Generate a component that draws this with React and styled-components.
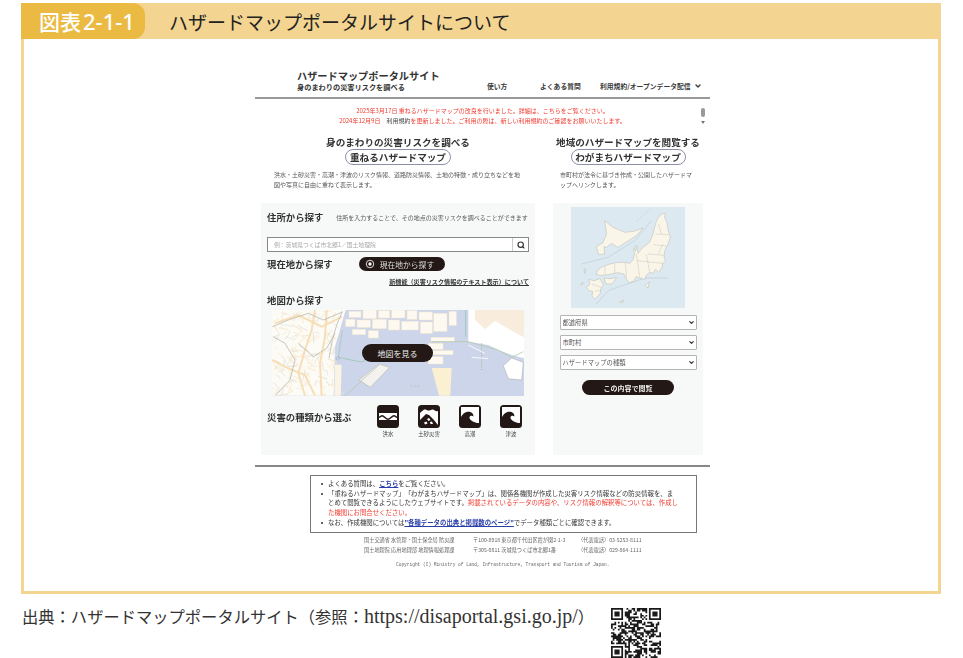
import React from 'react';
import styled, { createGlobalStyle } from 'styled-components';
import { Search, ChevronDown } from 'lucide-react';

const GlobalStyle = createGlobalStyle`
  html, body {
    margin: 0;
    padding: 0;
    background: #fff;
    font-family: "Noto Sans CJK JP", "Noto Sans", sans-serif;
  }
`;

const seeded = (start) => {
  let seed = start;
  return () => {
    seed = (seed * 16807) % 2147483647;
    return seed / 2147483647;
  };
};

// rough outline of the QR, seeded so it stays the same between runs
const buildQrPath = () => {
  const size = 29;
  const next = seeded(7);
  const inFinder = (x, y, ox, oy) => x >= ox && x < ox + 7 && y >= oy && y < oy + 7;
  const finder = (x, y, ox, oy) => {
    const dx = x - ox;
    const dy = y - oy;
    if (dx === 0 || dx === 6 || dy === 0 || dy === 6) return true;
    return dx >= 2 && dx <= 4 && dy >= 2 && dy <= 4;
  };
  let d = '';
  for (let y = 0; y < size; y++) {
    for (let x = 0; x < size; x++) {
      let on;
      if (inFinder(x, y, 0, 0)) on = finder(x, y, 0, 0);
      else if (inFinder(x, y, 22, 0)) on = finder(x, y, 22, 0);
      else if (inFinder(x, y, 0, 22)) on = finder(x, y, 0, 22);
      else if (x === 7 && y < 8) on = false;
      else if (y === 7 && x < 8) on = false;
      else if (x === 21 && y < 8) on = false;
      else if (y === 7 && x > 20) on = false;
      else if (x === 7 && y > 20) on = false;
      else if (y === 21 && x < 8) on = false;
      else on = next() > 0.5;
      if (on) d += `M${x} ${y}h1v1h-1z`;
    }
  }
  return d;
};

const qrPath = buildQrPath();

const QrCode = () => (
  <QrSvg viewBox="0 0 29 29">
    <path d={qrPath} fill="#1a1a1a" />
  </QrSvg>
);

const HazardIcon = ({ kind }) => (
  <svg width="22" height="23" viewBox="0 0 22 23">
    <rect x="0" y="0" width="22" height="23" rx="3.5" fill="#231815" />
    {kind === 'flood' && (
      <>
        <rect x="2" y="8" width="18" height="7" fill="#fff" />
        <path d="M2 12.500c3-2.400 3.400-2.400 6 0s3.400 2.400 6 0 3.400-2.400 6 0" fill="none" stroke="#231815" strokeWidth="1.500" />
      </>
    )}
    {kind === 'slide' && (
      <>
        <path d="M2 2h18v18h-18z" fill="#fff" />
        <path d="M2 2h18v4c-2 1-3.500-1-5-1.500s-3 1.500-5 1-3-1.500-4.500-.5S3 7 2 8z" fill="#231815" />
        <path d="M2 20v-5l6-6 3 1 4 4 5 6z" fill="#231815" />
        <path d="M9 14l2-1 1.500 2-2 1zM6 17.500l2.500-1 1 2-2.500 1zM12 17l2-.5 1 2.500h-2.500z" fill="#fff" />
      </>
    )}
    {kind === 'wave' && (
      <path
        d="M2 2H20V18H18C14 17 10.500 15 10.500 12.500C10.500 10.500 13 10 14.500 11.500C14.500 7.500 11 6 7.500 7C5 7.700 3 10 2 12Z"
        fill="#fff"
      />
    )}
  </svg>
);

// thin street texture on the left hand land, seeded
const buildStreets = () => {
  const next = seeded(41);
  const colors = ['#e4e1d8', '#f7e2bd', '#dcd9d0', '#f3ead6', '#f7e2bd'];
  const streets = [];
  for (let i = 0; i < 170; i++) {
    const x = 52 + next() * 190;
    const y = 30 + next() * 258;
    const len = 10 + next() * 26;
    const angle = next() * Math.PI;
    streets.push({
      d: `M${x.toFixed(0)} ${y.toFixed(0)}L${(x + Math.cos(angle) * len).toFixed(0)} ${(y + Math.sin(angle) * len).toFixed(0)}`,
      color: colors[i % colors.length],
    });
  }
  return streets;
};

const streets = buildStreets();

const mainRoads = [
  'M52 180 L100 205 L150 225 L180 287',
  'M180 30 L170 90 L150 150 L130 220 L150 287',
  'M215 30 L210 110 L195 190 L200 287',
  'M60 70 L130 45 L200 80 L262 50',
];

const grayRoads = [
  'M52 80 L100 60 L160 40 L205 60 L262 36',
  'M55 110 L90 130 L120 180 L105 240 L60 287',
  'M130 130 L175 170 L215 145 L240 100',
  'M262 34 L245 75 L232 120 L222 175',
];

const pierBlocks = [
  [282, 34, 36, 18],
  [324, 30, 40, 26],
  [370, 32, 34, 22],
  [410, 30, 40, 24],
  [456, 32, 30, 26],
  [492, 36, 40, 24],
  [272, 58, 28, 22],
  [306, 60, 40, 22],
  [352, 58, 42, 28],
  [400, 60, 34, 30],
  [440, 64, 50, 26],
  [496, 66, 36, 34],
  [292, 88, 40, 16],
  [340, 92, 30, 22],
  [536, 40, 40, 54],
  [582, 34, 22, 42],
  [528, 112, 70, 12],
  [520, 130, 44, 18],
  [528, 152, 66, 12],
  [520, 170, 44, 22],
];

const TokyoMap = () => (
  <MapSvg viewBox="51 30 756 258" preserveAspectRatio="none">
    <rect x="51" y="30" width="756" height="258" fill="#ccd5ea" />
    <path d="M51 30H272L254 92L240 140L236 287H51Z" fill="#fdfbf6" />
    {streets.map(({ d, color }) => (
      <path key={d} d={d} stroke={color} strokeWidth="2" />
    ))}
    {mainRoads.map((d) => (
      <path key={d} d={d} fill="none" stroke="#f6dfb6" strokeWidth="6" />
    ))}
    {grayRoads.map((d) => (
      <path key={d} d={d} fill="none" stroke="#bcbab4" strokeWidth="2.500" />
    ))}
    {pierBlocks.map(([x, y, w, h]) => (
      <rect key={`${x}-${y}`} x={x} y={y} width={w} height={h} fill="#fdf9f0" stroke="#f5e8cc" strokeWidth="1.500" />
    ))}
    <path d="M640 30H807V175L770 165L730 150L700 135L640 125Z" fill="#fff" />
    <path d="M660 30H807V112L770 92L720 62L690 88L660 60Z" fill="#f8ecdc" />
    <path d="M530 204H590L586 287H552Z" fill="#fbf0d2" />
    <path d="M240 194H260L257 287H238Z" fill="#faf4e6" />
    <path d="M312 240L372 192L404 202L346 262Z" fill="#f3f2ee" stroke="#b9b8b4" strokeWidth="2" />
    <path d="M745 197L770 174L805 187L800 240L760 236Z" fill="#fff" stroke="#a5a5a5" strokeWidth="1.500" />
    <path d="M680 130V210" stroke="#b4ae9f" strokeWidth="3" strokeDasharray="3 4" />
    <path d="M640 135L690 160M650 172L700 176" stroke="#fff" strokeWidth="2.500" />
    <path d="M530 125H640L730 150L770 172L805 155" fill="none" stroke="#b0c8a0" strokeWidth="2.200" />
    <path d="M250 172L320 186L362 168" fill="none" stroke="#8fc6a4" strokeWidth="2" />
    <path d="M372 195L270 287" fill="none" stroke="#b4c8a8" strokeWidth="2.200" />
    <path d="M262 90L250 170" fill="none" stroke="#8fbf9a" strokeWidth="1.500" />
    <path d="M632 30V110" stroke="#85bfa4" strokeWidth="2" />
    <circle cx="248" cy="175" r="5" fill="none" stroke="#8d9cc4" strokeWidth="1.500" />
    <path d="M468 258h3M478 258h3M488 258h3" stroke="#b9a97f" strokeWidth="2.500" />
  </MapSvg>
);

const JapanMap = () => (
  <JapanSvg viewBox="9 9 342 303" preserveAspectRatio="none">
    <rect x="9" y="9" width="342" height="303" fill="#dce9f1" />
    <g fill="none" stroke="#b6c2c9" strokeWidth="1.500">
      <path d="M40 180L120 160L200 110L250 50" />
      <path d="M85 300L120 260L230 222L300 222" />
      <path d="M205 52L248 14" strokeDasharray="8 5" />
    </g>
    <g fill="#f9f5e8" stroke="#aeaca2" strokeWidth="1.200">
      <path d="M110 50L135 70L170 85L198 82L225 72L205 95L172 116L150 130L130 118L116 130L108 128L110 150L92 152L85 128L105 116L116 90Z" />
      <path d="M270 42L280 30L292 28L290 42L297 55L300 78L307 100L300 120L290 140L288 160L293 172L284 178L282 190L272 205L262 196L256 208L246 205L236 212L230 226L218 222L205 218L196 232L184 236L175 225L168 210L150 206L140 208L120 212L100 214L85 212L88 200L100 190L125 180L145 176L170 175L185 178L195 168L200 150L196 136L207 130L210 148L225 130L245 115L255 90L260 70L264 55Z" />
      <path d="M108 222L128 224L146 220L138 232L130 240L114 240Z" />
      <path d="M62 226L78 230L96 224L106 242L98 256L96 270L80 286L72 276L74 262L62 260L56 250L66 240Z" />
      <path d="M200 128L208 125L202 142Z" />
      <path d="M232 244L244 234L240 252Z" />
      <path d="M48 196L54 196L50 208Z" />
      <path d="M155 294L168 288L164 296Z" />
      <path d="M38 240L46 236L42 244Z" />
    </g>
    <g fill="none" stroke="#bdbab0" strokeWidth="1.200">
      <path d="M262 90L302 92M256 122L296 126M240 150L288 154M205 170L284 178M235 150L245 205M205 150L215 218M172 175L176 222M140 180L140 208M110 188L112 212M72 240L100 250M80 262L98 258M272 60L280 90M285 120L270 150" />
    </g>
  </JapanSvg>
);

const App = () => (
  <Page>
    <GlobalStyle />
    <FigureHeader>
      <Badge>図表<BadgeNumber>2-1-1</BadgeNumber></Badge>
      <FigureTitle>ハザードマップポータルサイトについて</FigureTitle>
    </FigureHeader>
    <FigureBody>
      <Site>
        <SiteHeader>
          <Brand>
            <BrandTitle>ハザードマップポータルサイト</BrandTitle>
            <BrandSub>身のまわりの災害リスクを調べる</BrandSub>
          </Brand>
          <Nav>
            <NavItem $width={53}>使い方</NavItem>
            <NavItem $width={60}>よくある質問</NavItem>
            <NavItem $width={106}>
              利用規約/オープンデータ配信
              <ChevronDown size={8} strokeWidth={4} />
            </NavItem>
          </Nav>
        </SiteHeader>
        <Notices>
          <div>2025年3月17日 重ねるハザードマップの改良を行いました。詳細は、こちらをご覧ください。</div>
          <div>
            2024年12月9日　<NoticeDark>利用規約</NoticeDark>を更新しました。ご利用の際は、新しい利用規約のご確認をお願いいたします。
          </div>
          <ScrollThumb />
          <ScrollArrow />
        </Notices>
        <Columns>
          <Column $width={274}>
            <Intro $indent={13}>
              <IntroHeading>身のまわりの災害リスクを調べる</IntroHeading>
              <PillTitle $width={106}>重ねるハザードマップ</PillTitle>
              <IntroText>
                洪水・土砂災害・高潮・津波のリスク情報、道路防災情報、土地の特徴・成り立ちなどを地図や写真に自由に重ねて表示します。
              </IntroText>
            </Intro>
            <Panel $pad={6}>
              <TopRow>
                <SectionTitle>住所から探す</SectionTitle>
                <SectionHint>住所を入力することで、その地点の災害リスクを調べることができます</SectionHint>
              </TopRow>
              <SearchBox>
                <Placeholder>例：茨城県つくば市北郷1／国土地理院</Placeholder>
                <SearchButton>
                  <Search size={8} strokeWidth={3.5} />
                </SearchButton>
              </SearchBox>
              <LocateRow>
                <SectionTitle>現在地から探す</SectionTitle>
                <LocateButton>
                  <LocateIcon viewBox="0 0 12 12">
                    <circle cx="6" cy="6" r="4.500" fill="none" stroke="#fff" strokeWidth="1" />
                    <circle cx="6" cy="6" r="2" fill="#fff" />
                  </LocateIcon>
                  現在地から探す
                </LocateButton>
              </LocateRow>
              <TextLink>新機能（災害リスク情報のテキスト表示）について</TextLink>
              <MapTitle>地図から探す</MapTitle>
              <MapFrame>
                <TokyoMap />
                <MapButton>地図を見る</MapButton>
              </MapFrame>
              <HazardRow>
                <HazardLabel>災害の種類から選ぶ</HazardLabel>
                <HazardList>
                  <HazardItem>
                    <HazardIcon kind="flood" />
                    <HazardName>洪水</HazardName>
                  </HazardItem>
                  <HazardItem>
                    <HazardIcon kind="slide" />
                    <HazardName>土砂災害</HazardName>
                  </HazardItem>
                  <HazardItem>
                    <HazardIcon kind="wave" />
                    <HazardName>高潮</HazardName>
                  </HazardItem>
                  <HazardItem>
                    <HazardIcon kind="wave" />
                    <HazardName>津波</HazardName>
                  </HazardItem>
                </HazardList>
              </HazardRow>
            </Panel>
          </Column>
          <Column $width={150}>
            <Intro $indent={7}>
              <IntroHeading>地域のハザードマップを閲覧する</IntroHeading>
              <PillTitle $width={115}>わがまちハザードマップ</PillTitle>
              <IntroText>市町村が法令に基づき作成・公開したハザードマップへリンクします。</IntroText>
            </Intro>
            <Panel $pad={0}>
              <JapanFrame>
                <JapanMap />
              </JapanFrame>
              <SelectStack>
                {['都道府県', '市町村', 'ハザードマップの種類'].map((label) => (
                  <SelectWrap key={label}>
                    <Select defaultValue={label}>
                      <option value={label}>{label}</option>
                    </Select>
                    <SelectArrow>
                      <ChevronDown size={7} strokeWidth={4} />
                    </SelectArrow>
                  </SelectWrap>
                ))}
              </SelectStack>
              <ViewButton>この内容で閲覧</ViewButton>
            </Panel>
          </Column>
        </Columns>
        <BottomRule />
        <NoteBox>
          <NoteList>
            <NoteItem>
              よくある質問は、<NoteLink>こちら</NoteLink>をご覧ください。
            </NoteItem>
            <NoteItem>
              「重ねるハザードマップ」「わがまちハザードマップ」は、関係各機関が作成した災害リスク情報などの防災情報を、まとめて閲覧できるようにしたウェブサイトです。
              <NoteRed>掲載されているデータの内容や、リスク情報の解釈等については、作成した機関にお問合せください。</NoteRed>
            </NoteItem>
            <NoteItem>
              なお、作成機関については<NoteLink>"各種データの出典と掲載数のページ"</NoteLink>でデータ種類ごとに確認できます。
            </NoteItem>
          </NoteList>
        </NoteBox>
        <Contacts>
          <span>国土交通省 水管理・国土保全局 防災課</span>
          <span>〒100-8918 東京都千代田区霞が関2-1-3</span>
          <span>（代表電話）03-5253-8111</span>
          <span>国土地理院 応用地理部 地理情報処理課</span>
          <span>〒305-0811 茨城県つくば市北郷1番</span>
          <span>（代表電話）029-864-1111</span>
        </Contacts>
        <Copyright>Copyright (C) Ministry of Land, Infrastructure, Transport and Tourism of Japan.</Copyright>
      </Site>
    </FigureBody>
    <CaptionRow>
      <Caption>
        出典：ハザードマップポータルサイト（参照：<CaptionUrl>https://disaportal.gsi.go.jp/</CaptionUrl>）
      </Caption>
      <QrCode />
    </CaptionRow>
  </Page>
);

export default App;

const Page = styled.div`
  width: 963px;
  height: 658px;
  padding: 3px 0 0 21px;
  box-sizing: border-box;
  overflow: hidden;
  background: #fff;
`;

const FigureHeader = styled.div`
  display: flex;
  align-items: center;
  width: 920px;
  height: 36px;
  background: #f3d591;
`;

const Badge = styled.div`
  width: 124px;
  height: 36px;
  box-sizing: border-box;
  padding-left: 18px;
  display: flex;
  align-items: center;
  border-radius: 0 12px 12px 0;
  background: #eaba42;
  color: #fff;
  font-size: 21px;
  font-weight: 500;
  white-space: nowrap;
`;

const BadgeNumber = styled.span`
  margin-left: 2px;
  font-family: "Noto Sans", sans-serif;
  font-size: 22px;
`;

const FigureTitle = styled.div`
  margin-left: 24px;
  font-size: 19px;
  color: #222;
  white-space: nowrap;
`;

const FigureBody = styled.div`
  width: 920px;
  height: 555px;
  box-sizing: border-box;
  border: 3px solid #f3d591;
  border-top: none;
  padding: 24px 0 0 231px;
`;

const Site = styled.div`
  width: 455px;
  color: #333;
  filter: blur(0.45px);
`;

const SiteHeader = styled.div`
  height: 34px;
  display: flex;
  justify-content: space-between;
  border-bottom: 2px solid #999;
  background: #fff;
`;

const Brand = styled.div`
  padding: 6px 0 0 42px;
`;

const BrandTitle = styled.div`
  font-size: 10.2px;
  line-height: 13px;
  font-weight: 700;
  color: #333;
  white-space: nowrap;
`;

const BrandSub = styled.div`
  font-size: 7.2px;
  line-height: 10px;
  font-weight: 700;
  color: #333;
  white-space: nowrap;
`;

const Nav = styled.div`
  display: flex;
  align-items: center;
  padding-top: 12px;
  padding-right: 4px;
`;

const NavItem = styled.div`
  width: ${(p) => p.$width}px;
  display: flex;
  align-items: center;
  gap: 3px;
  font-size: 6.8px;
  font-weight: 700;
  color: #3a3a3a;
  white-space: nowrap;
`;

const Notices = styled.div`
  position: relative;
  height: 31px;
  padding-top: 7px;
  box-sizing: border-box;
  font-size: 6px;
  line-height: 10px;
  color: #f23b30;
  text-align: center;
  white-space: nowrap;
`;

const NoticeDark = styled.span`
  color: #444;
`;

const ScrollThumb = styled.div`
  position: absolute;
  top: 9px;
  right: 5px;
  width: 4px;
  height: 9px;
  border-radius: 2px;
  background: #999;
`;

const ScrollArrow = styled.div`
  position: absolute;
  top: 22px;
  right: 5px;
  width: 0;
  height: 0;
  border-left: 2px solid transparent;
  border-right: 2px solid transparent;
  border-top: 3px solid #777;
`;

const Columns = styled.div`
  display: flex;
  gap: 18px;
  padding-left: 6px;
`;

const Column = styled.div`
  width: ${(p) => p.$width}px;
`;

const Intro = styled.div`
  height: 73px;
  box-sizing: border-box;
  padding-top: 6px;
  display: flex;
  flex-direction: column;
  align-items: center;
  --indent: ${(p) => p.$indent}px;
`;

const IntroHeading = styled.div`
  font-size: 9.6px;
  line-height: 12px;
  font-weight: 700;
  color: #333;
  white-space: nowrap;
`;

const PillTitle = styled.div`
  width: ${(p) => p.$width}px;
  height: 16px;
  box-sizing: border-box;
  margin-top: 1px;
  display: flex;
  align-items: center;
  justify-content: center;
  border: 1px solid #8c8fa8;
  border-radius: 8px;
  font-size: 9.6px;
  font-weight: 700;
  color: #333;
  white-space: nowrap;
`;

const IntroText = styled.div`
  align-self: stretch;
  margin-top: 5px;
  padding: 0 var(--indent);
  font-size: 6px;
  line-height: 10px;
  color: #555;
`;

const Panel = styled.div`
  height: 252px;
  box-sizing: border-box;
  padding: 7px ${(p) => p.$pad}px 0;
  background: #f7f9f9;
`;

const TopRow = styled.div`
  height: 14px;
  display: flex;
  align-items: center;
  gap: 13px;
`;

const SectionTitle = styled.div`
  font-size: 9.4px;
  line-height: 14px;
  font-weight: 700;
  color: #333;
  white-space: nowrap;
`;

const SectionHint = styled.div`
  font-size: 6px;
  color: #555;
  white-space: nowrap;
`;

const SearchBox = styled.div`
  width: 262px;
  height: 15px;
  box-sizing: border-box;
  margin-top: 13px;
  display: flex;
  align-items: center;
  justify-content: space-between;
  border: 1px solid #888;
  background: #fff;
`;

const Placeholder = styled.div`
  padding-left: 6px;
  font-size: 5.8px;
  color: #aaa;
  white-space: nowrap;
`;

const SearchButton = styled.div`
  width: 15px;
  height: 100%;
  display: flex;
  align-items: center;
  justify-content: center;
  border-left: 1px solid #ccc;
  color: #333;
`;

const LocateRow = styled.div`
  height: 14px;
  margin-top: 5px;
  display: flex;
  align-items: center;
  gap: 26px;
`;

const LocateButton = styled.div`
  width: 86px;
  height: 14px;
  box-sizing: border-box;
  padding-left: 6px;
  display: flex;
  align-items: center;
  gap: 5px;
  border-radius: 7px;
  background: #231815;
  color: #ddd;
  font-size: 7.8px;
  white-space: nowrap;
`;

const LocateIcon = styled.svg`
  width: 10px;
  height: 10px;
  flex: none;
`;

const TextLink = styled.div`
  margin-top: 7px;
  height: 8px;
  line-height: 8px;
  text-align: right;
  font-size: 6.1px;
  font-weight: 700;
  color: #333;
  text-decoration: underline;
  white-space: nowrap;
`;

const MapTitle = styled(SectionTitle)`
  margin-top: 8px;
  line-height: 13px;
`;

const MapFrame = styled.div`
  position: relative;
  width: 252px;
  height: 86px;
  margin: 3px 0 0 5px;
`;

const MapSvg = styled.svg`
  display: block;
  width: 100%;
  height: 100%;
  filter: blur(0.4px);
`;

const MapButton = styled.div`
  position: absolute;
  left: 90px;
  top: 34px;
  width: 71px;
  height: 18px;
  display: flex;
  align-items: center;
  justify-content: center;
  border-radius: 9px;
  background: #231815;
  color: #eee;
  font-size: 8px;
`;

const HazardRow = styled.div`
  margin-top: 9px;
  display: flex;
  align-items: flex-start;
  justify-content: space-between;
`;

const HazardLabel = styled.div`
  margin-top: 5px;
  font-size: 9.4px;
  line-height: 14px;
  font-weight: 700;
  color: #333;
  white-space: nowrap;
`;

const HazardList = styled.div`
  display: flex;
  gap: 19px;
  margin-right: 7px;
`;

const HazardItem = styled.div`
  width: 22px;
  display: flex;
  flex-direction: column;
  align-items: center;
`;

const HazardName = styled.div`
  margin-top: 2px;
  font-size: 5.4px;
  line-height: 8px;
  color: #444;
  white-space: nowrap;
`;

const JapanFrame = styled.div`
  width: 114px;
  height: 101px;
  margin: -3px auto 0;
`;

const JapanSvg = styled.svg`
  display: block;
  width: 100%;
  height: 100%;
`;

const SelectStack = styled.div`
  margin-top: 7px;
  display: flex;
  flex-direction: column;
  align-items: center;
  gap: 5px;
`;

const SelectWrap = styled.div`
  position: relative;
  width: 137px;
  height: 15px;
`;

const Select = styled.select`
  display: block;
  width: 100%;
  height: 100%;
  box-sizing: border-box;
  appearance: none;
  padding: 0 0 0 2px;
  border: 1px solid #b4b4b4;
  border-radius: 1px;
  background: #fff;
  font-family: "Noto Sans CJK JP", sans-serif;
  font-size: 6.3px;
  color: #555;
`;

const SelectArrow = styled.div`
  position: absolute;
  right: 2px;
  top: 4px;
  display: flex;
  color: #333;
`;

const ViewButton = styled.div`
  width: 92px;
  height: 15px;
  margin: 10px auto 0;
  display: flex;
  align-items: center;
  justify-content: center;
  border-radius: 8px;
  background: #231815;
  color: #eee;
  font-size: 7px;
  font-weight: 700;
`;

const BottomRule = styled.div`
  height: 2px;
  margin-top: 10px;
  background: #888;
`;

const NoteBox = styled.div`
  width: 387px;
  height: 58px;
  box-sizing: border-box;
  margin: 8px 0 0 55px;
  padding: 3px 18px 0 0;
  border: 1px solid #777;
`;

const NoteList = styled.ul`
  margin: 0;
  padding: 0 0 0 17px;
  list-style: none;
  font-size: 6.4px;
  line-height: 9.7px;
  color: #333;
  text-spacing-trim: space-all;
`;

const NoteItem = styled.li`
  position: relative;

  &::before {
    content: '';
    position: absolute;
    left: -7px;
    top: 4px;
    width: 2px;
    height: 2px;
    border-radius: 50%;
    background: #333;
  }
`;

const NoteLink = styled.span`
  color: #2a3fa8;
  font-weight: 700;
  text-decoration: underline;
`;

const NoteRed = styled.span`
  color: #f23b30;
`;

const Contacts = styled.div`
  margin: 2px 0 0 109px;
  display: grid;
  grid-template-columns: 109px 105px auto;
  justify-content: start;
  font-size: 5.2px;
  line-height: 10px;
  color: #666;
  white-space: nowrap;
`;

const Copyright = styled.div`
  margin: 5px 0 0 141px;
  font-family: "Liberation Mono", monospace;
  font-size: 4.5px;
  line-height: 10px;
  color: #666;
  white-space: nowrap;
`;

const CaptionRow = styled.div`
  display: flex;
  align-items: flex-start;
  padding: 14px 0 0 1px;
`;

const Caption = styled.div`
  width: 589px;
  font-size: 16.3px;
  line-height: 16px;
  color: #333;
  white-space: nowrap;
`;

const CaptionUrl = styled.span`
  font-family: "Liberation Serif", serif;
  font-size: 20px;
`;

const QrSvg = styled.svg`
  width: 50px;
  height: 50px;
  flex: none;
`;
